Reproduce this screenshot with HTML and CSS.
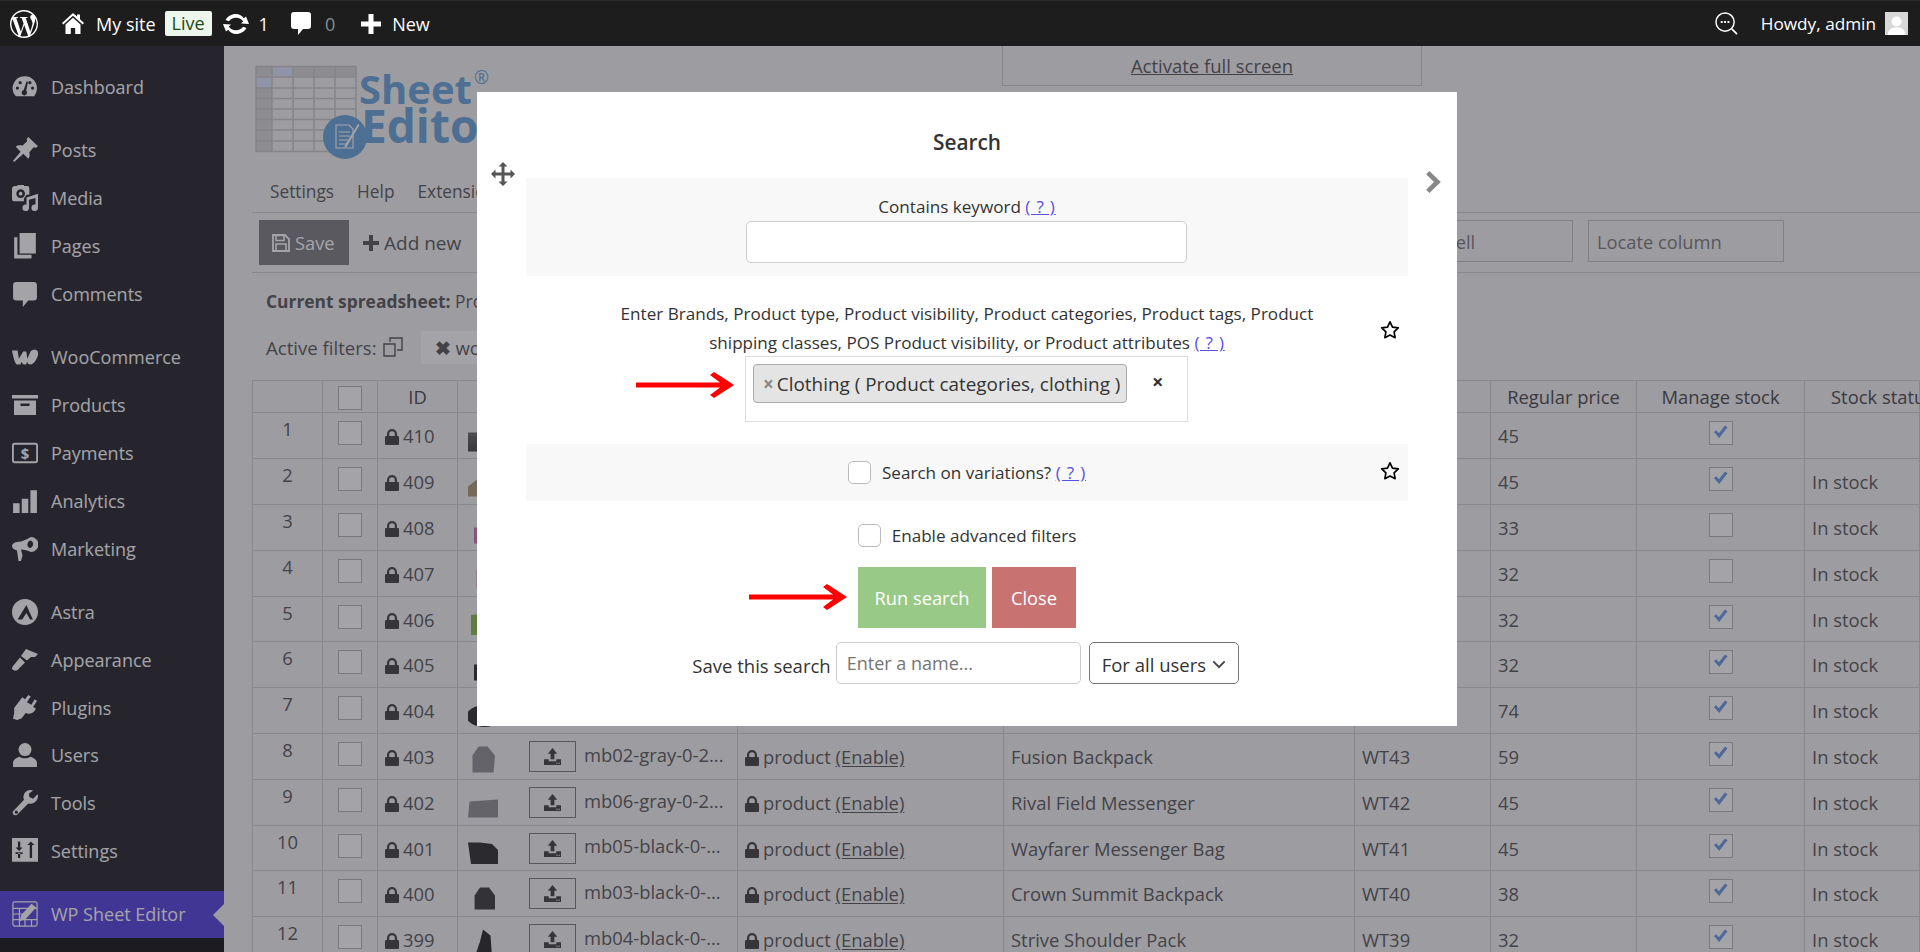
FILE: index.html
```html
<!DOCTYPE html>
<html lang="en">
<head>
  <meta charset="UTF-8" />
  <title>WP Sheet Editor</title>
  <link rel="stylesheet" href="styles.css" />
</head>
<body>
  <!-- shared icons -->
  <svg class="defs" aria-hidden="true">
    <symbol id="i-lock" viewBox="0 0 14 16"><path d="M2 7V5a5 5 0 0 1 10 0v2h1a1 1 0 0 1 1 1v7a1 1 0 0 1-1 1H1a1 1 0 0 1-1-1V8a1 1 0 0 1 1-1zm2.200 0h5.600V5a2.800 2.800 0 0 0-5.600 0z"/></symbol>
    <symbol id="i-upload" viewBox="0 0 18 18"><path d="M9 0l5 6h-3v6H7V6H4zM0 12h5v2h8v-2h5v6H0zm13 3.600v1h1.400v-1zm2.400 0v1h1.400v-1z" fill-rule="evenodd"/></symbol>
    <symbol id="i-check" viewBox="0 0 16 14"><path d="M1 7l2.500-2 2.800 3.200L12.800 0 15.500 2 6.600 13.500z"/></symbol>
    <symbol id="i-star" viewBox="0 0 20 20"><path d="M10 1.800l2.500 5.300 5.800.8-4.200 4 1 5.800L10 15.100l-5.100 2.600 1-5.800-4.200-4 5.800-.8z" fill="none" stroke="#000" stroke-width="1.700" stroke-linejoin="round"/></symbol>
  </svg>

  <!-- Admin bar -->
  <header class="adminbar">
    <svg class="ab-wp" viewBox="0 0 24 24"><path fill="#fff" d="M21.469 6.825c.84 1.537 1.318 3.3 1.318 5.175 0 3.979-2.156 7.456-5.363 9.325l3.295-9.527c.615-1.54.82-2.771.82-3.864 0-.405-.026-.78-.07-1.11m-7.981.105c.647-.03 1.232-.105 1.232-.105.582-.075.514-.93-.067-.899 0 0-1.755.135-2.88.135-1.064 0-2.85-.15-2.85-.15-.585-.03-.661.855-.075.885 0 0 .54.061 1.125.09l1.68 4.605-2.37 7.08L5.354 6.9c.649-.03 1.234-.1 1.234-.1.585-.075.516-.93-.065-.896 0 0-1.746.138-2.874.138-.2 0-.438-.008-.69-.015C4.911 3.15 8.235 1.215 12 1.215c2.809 0 5.365 1.072 7.286 2.833-.046-.003-.091-.009-.141-.009-1.06 0-1.812.923-1.812 1.914 0 .89.513 1.643 1.06 2.531.411.72.89 1.643.89 2.977 0 .915-.354 1.994-.821 3.479l-1.075 3.585-3.9-11.61.001.014zM12 22.784c-1.059 0-2.081-.153-3.048-.437l3.237-9.406 3.315 9.087c.024.053.05.101.078.149-1.12.393-2.325.609-3.582.609M1.211 12c0-1.564.336-3.05.935-4.39L7.29 21.709C3.694 19.96 1.212 16.271 1.211 12M12 0C5.385 0 0 5.385 0 12s5.385 12 12 12 12-5.385 12-12S18.615 0 12 0"/></svg>
    <svg class="ab-home" viewBox="0 0 22 21"><path fill="#fff" d="M11 0l4 3.600V1.500h3v4.800L22 10l-1.300 1.400L11 2.800 1.300 11.400 0 10z"/><path fill="#fff" d="M3.500 11.500L11 4.800l7.500 6.700V21h-5.300v-6H8.800v6H3.500z"/></svg>
    <span class="ab-site">My site</span>
    <span class="ab-live">Live</span>
    <svg class="ab-updates" viewBox="0 0 26 20"><path fill="#fff" d="M13 0c3.300 0 6.200 1.700 7.800 4.300L23 2.500 26 10l-8-.6 2.200-1.900C19 5.300 16.200 3.700 13 3.700c-3 0-5.600 1.400-7 3.600L2.500 6C4.500 2.400 8.400 0 13 0zM0 10l8 .6-2.200 1.900c1.200 2.200 4 3.800 7.200 3.800 3 0 5.600-1.400 7-3.600l3.500 1.300C21.500 17.600 17.600 20 13 20c-3.300 0-6.200-1.700-7.800-4.300L3 17.500z"/></svg>
    <span class="ab-count">1</span>
    <svg class="ab-comment" viewBox="0 0 20 23"><path fill="#fff" d="M3 0h14a3 3 0 0 1 3 3v11a3 3 0 0 1-3 3h-5l-5 6v-6H3a3 3 0 0 1-3-3V3a3 3 0 0 1 3-3z"/></svg>
    <span class="ab-count ab-zero">0</span>
    <svg class="ab-plus" viewBox="0 0 20 20"><path fill="#fff" d="M7.500 0h5v7.500H20v5h-7.500V20h-5v-7.500H0v-5h7.500z"/></svg>
    <span class="ab-new">New</span>
    <svg class="ab-search" viewBox="0 0 24 24"><circle cx="10.500" cy="10.500" r="9.500" fill="none" stroke="#fff" stroke-width="1.500"/><path d="M17.500 17.500L23 23" stroke="#fff" stroke-width="1.800" fill="none"/><path d="M6 9.500h2v2H6zm3.500 0h2v2h-2zm3.500 0h2v2h-2z" fill="#fff"/></svg>
    <span class="ab-howdy">Howdy, admin</span>
    <svg class="ab-avatar" viewBox="0 0 24 24"><path fill="#d8d8d8" d="M0 0h24v24H0z"/><circle cx="12" cy="10" r="5.200" fill="#fff"/><path fill="#fff" d="M3 24c0-6 4-8 9-8s9 2 9 8z"/></svg>
  </header>

  <div class="layout">
    <!-- Sidebar -->
    <aside class="sidebar">
      <ul class="menu">
        <li><svg viewBox="0 0 24 24"><path d="M12 2a11 11 0 0 1 11 11c0 3-1 5.500-2.600 7.500H3.600A11 11 0 0 1 12 2zM5 11.500a1.500 1.500 0 1 0 0 3 1.500 1.500 0 0 0 0-3zm2.500-5a1.500 1.500 0 1 0 0 3 1.500 1.500 0 0 0 0-3zm9 0a1.500 1.500 0 1 0 0 3 1.500 1.500 0 0 0 0-3zm2.500 5a1.500 1.500 0 1 0 0 3 1.500 1.500 0 0 0 0-3zM13.500 6.800l-2.700 8a2.500 2.500 0 1 0 2.300.6l1.700-8.300z" fill-rule="evenodd"/></svg>Dashboard</li>
        <li class="gap"></li>
        <li><svg viewBox="0 0 24 24"><path d="M15 0l9 8.500-2 1.500-2-.5-4 4.500c.7 2.500.3 4.500-1 6l-4.500-4.500L2 23l-1-1 7-8.500L3.500 9c1.500-1.300 3.500-1.700 6-1l4.500-4-.5-2z"/></svg>Posts</li>
        <li><svg viewBox="0 0 24 24"><path d="M3 1h2V0h6v1h3a2 2 0 0 1 2 2v6h-2.500L11 12.500V15H2a2 2 0 0 1-2-2V4a3 3 0 0 1 3-3zm5 3a4 4 0 1 0 0 8 4 4 0 0 0 0-8zm0 2.300a1.700 1.700 0 1 1 0 3.400 1.700 1.700 0 0 1 0-3.400z" fill-rule="evenodd"/><path d="M24 9v13a3 3 0 1 1-2.300-2.900V13l-6 1.500V22a3 3 0 1 1-2.300-2.900V12.500z" transform="translate(0 -1)"/></svg>Media</li>
        <li><svg viewBox="0 0 24 24"><path d="M7 0h15v19H7zM2 4h3v16h13v3.500H2z"/></svg>Pages</li>
        <li><svg viewBox="0 0 24 24"><path d="M4 1h16a3 3 0 0 1 3 3v11a3 3 0 0 1-3 3h-5l-5 6v-6H4a3 3 0 0 1-3-3V4a3 3 0 0 1 3-3z"/></svg>Comments</li>
        <li class="gap"></li>
        <li><svg viewBox="0 0 28 16"><path d="M0 1h6l1.500 9L12 2h3.500l1 8L20 2c1-1.500 4-2 6-1.500 2.500 1 2.500 4 1.500 7C26 12 23 16 20 16c-2.500 0-3.500-1.500-3.500-3L15 16c-2 0-4 0-4.500-3L9 16H5.500C3.500 16 1.500 9 0 1z"/></svg>WooCommerce</li>
        <li><svg viewBox="0 0 26 20"><path d="M0 0h26v3.500H0zM2 5.500h22V20H2zm6.500 3v2.400h9V8.500z" fill-rule="evenodd"/></svg>Products</li>
        <li><svg viewBox="0 0 28 22"><path d="M3 1h22a2 2 0 0 1 2 2v16a2 2 0 0 1-2 2H3a2 2 0 0 1-2-2V3a2 2 0 0 1 2-2z" fill="none" stroke="currentColor" stroke-width="2"/><text x="14" y="17" class="dollar">$</text></svg>Payments</li>
        <li><svg viewBox="0 0 24 24"><path d="M1 14h6v9H1zm8-4h6v13H9zm8-8h6v21h-6z"/></svg>Analytics</li>
        <li><svg viewBox="0 0 26 26"><path d="M19 1a6.500 6.500 0 0 1 0 15c-3-1.500-7-2.500-10-2.500l1.500 6L9 25H6.500L5 14.500C2 14 0 12 0 10c0-2 2-3.500 5-4 5 0 10-3 14-5zm0 3.500a4 4 0 0 0-1.500 7.500 4 4 0 0 0 1.500-7.500z" fill-rule="evenodd"/></svg>Marketing</li>
        <li class="gap"></li>
        <li><svg viewBox="0 0 28 28"><path d="M14 0a14 14 0 1 1 0 28 14 14 0 0 1 0-28zm1.500 6.500L6 22h5l4.500-7 4 7h3z" fill-rule="evenodd"/></svg>Astra</li>
        <li><svg viewBox="0 0 26 22"><path d="M14 0l12 5-3 3h-4l-3 2.500-1 1L9 7zM8 8.500l5 5L5.500 21c-1.500 1-4 1-5-.5-1-1.500 0-3 1-4z"/></svg>Appearance</li>
        <li><svg viewBox="0 0 24 24"><path d="M15 0l2.300 1.300-3.500 5.300 4 2.500L21 4l2 1.500-3.500 5.500 2.500 1.500-1 2c-2 2.500-5.500 3.500-8.500 2L9 21.500 5 23l-4-1 1-5.500-0-4.500L9.500 2l2.500 2z"/></svg>Plugins</li>
        <li><svg viewBox="0 0 24 24"><circle cx="12" cy="7" r="6"/><path d="M1 23v-4c0-3 4-5 6-5.500 3 2 7 2 10 0 2 .5 6 2.500 6 5.500v4z"/></svg>Users</li>
        <li><svg viewBox="0 0 24 24"><path d="M17 0a6.500 6.500 0 0 0-6.500 6.500c0 1 .2 1.800.6 2.500L1 19.500c-1.500 2 1 5 3.500 3.500L15 12.500c3.500 1 9-1.500 9-7l-.5-1.500L19.500 8 16 6.500l-.5-3L19.500 0.500zM4 19a1.500 1.500 0 1 1 0 3 1.500 1.500 0 0 1 0-3z" fill-rule="evenodd"/></svg>Tools</li>
        <li><svg viewBox="0 0 22 22"><path d="M0 0h22v20H0zM5 3v5H3l3 3 3-3H7V3zM5 13v4h2v-4zM15 6v11h2V6zM13 6h6l-3-3z M3 12h6v1.500H3z" fill-rule="evenodd"/></svg>Settings</li>
        <li class="gap"></li>
        <li class="active"><svg viewBox="0 0 28 28"><path d="M3 1h22a2 2 0 0 1 2 2v22a2 2 0 0 1-2 2H3a2 2 0 0 1-2-2V3a2 2 0 0 1 2-2zM1 8h26M1 14h14M1 20h26M8 8v19M14 20v7M21 20v7" fill="none" stroke="currentColor" stroke-width="1.300"/><path d="M21 3l5 4-11 12-7 3 2-7z"/></svg>WP Sheet Editor</li>
      </ul>
      <div class="sidebar-rest"></div>
    </aside>

    <!-- Spreadsheet page -->
    <main class="page">
      <div class="brand-row">
        <svg class="logo" viewBox="0 0 230 104">
          <g class="logo-head"><path d="M1 0h100v10H1z"/><path d="M1 10h16v76H1z"/></g>
          <path class="logo-sel" d="M17 0h22v11H17zM1 11h16v11H1z"/>
          <path class="logo-grid" d="M1 .5h100v85H1zM1 11h100M1 22h100M1 32.500h100M1 43h100M1 53.500h100M1 64h100M1 75h100M17 0v86M38 0v86M59 0v86M80 0v86"/>
          <circle class="logo-blue" cx="90" cy="71" r="22"/>
          <path d="M81 59h13l4 4v19H81zM84 66h11M84 70h11M84 74h11M84 78h8" fill="none" stroke="#fff" stroke-width="1.100"/>
          <path d="M103 58l1.500 1-13 22-2 1 .3-2.500z" fill="#fff"/>
          <text class="logo-sheet" x="104" y="38">Sheet</text>
          <text class="logo-edit" x="106" y="77">Editor</text>
          <text class="logo-reg" x="219" y="18">®</text>
        </svg>
        <a class="fullscreen" href="#">Activate full screen</a>
      </div>

      <nav class="tabs">
        <a href="#">Settings</a>
        <a href="#">Help</a>
        <a href="#">Extensions</a>
      </nav>

      <div class="toolbar">
        <button class="btn-save"><svg viewBox="0 0 18 18"><path d="M1 1h12l4 4v12H1z" fill="none" stroke="currentColor" stroke-width="1.800"/><path d="M4 1.500h8v5H4zM4 10h10v7H4z" fill="none" stroke="currentColor" stroke-width="1.600"/></svg>Save</button>
        <a class="btn-add" href="#"><svg viewBox="0 0 16 16"><path d="M6 0h4v6h6v4h-6v6H6v-6H0V6h6z"/></svg>Add new</a>
        <span class="toolbar-end">
          <input type="text" class="locate" placeholder="Locate cell" />
          <input type="text" class="locate" placeholder="Locate column" />
        </span>
      </div>

      <p class="current"><strong>Current spreadsheet:</strong> Products</p>
      <div class="filters">
        <span>Active filters:</span>
        <svg viewBox="0 0 20 20"><path d="M7 5V1h12v12h-5M1 7h11v12H1z" fill="none" stroke="currentColor" stroke-width="1.400"/></svg>
        <span class="filter-chip"><b>✖</b> woo</span>
      </div>

      <table class="sheet">
        <colgroup>
          <col class="c-n" /><col class="c-cb" /><col class="c-id" /><col class="c-file" /><col class="c-type" /><col class="c-title" /><col class="c-sku" /><col class="c-price" /><col class="c-manage" /><col class="c-stock" />
        </colgroup>
        <thead>
          <tr><th></th><th><i class="cb"></i></th><th>ID</th><th></th><th></th><th></th><th></th><th>Regular price</th><th>Manage stock</th><th class="th-stock">Stock status</th></tr>
        </thead>
        <tbody>
          <tr><td class="n">1</td><td class="m"><i class="cb"></i></td><td><svg class="lock"><use href="#i-lock"/></svg>410</td><td class="file"><span class="thumb t1"></span><span class="up"></span></td><td></td><td></td><td></td><td>45</td><td class="m"><i class="cb on"><svg><use href="#i-check"/></svg></i></td><td></td></tr>
          <tr><td class="n">2</td><td class="m"><i class="cb"></i></td><td><svg class="lock"><use href="#i-lock"/></svg>409</td><td class="file"><span class="thumb t2"></span><span class="up"></span></td><td></td><td></td><td></td><td>45</td><td class="m"><i class="cb on"><svg><use href="#i-check"/></svg></i></td><td>In stock</td></tr>
          <tr><td class="n">3</td><td class="m"><i class="cb"></i></td><td><svg class="lock"><use href="#i-lock"/></svg>408</td><td class="file"><span class="thumb t3"></span><span class="up"></span></td><td></td><td></td><td></td><td>33</td><td class="m"><i class="cb"></i></td><td>In stock</td></tr>
          <tr><td class="n">4</td><td class="m"><i class="cb"></i></td><td><svg class="lock"><use href="#i-lock"/></svg>407</td><td class="file"><span class="thumb t4"></span><span class="up"></span></td><td></td><td></td><td></td><td>32</td><td class="m"><i class="cb"></i></td><td>In stock</td></tr>
          <tr class="short"><td class="n">5</td><td class="m"><i class="cb"></i></td><td><svg class="lock"><use href="#i-lock"/></svg>406</td><td class="file"><span class="thumb t5"></span><span class="up"></span></td><td></td><td></td><td></td><td>32</td><td class="m"><i class="cb on"><svg><use href="#i-check"/></svg></i></td><td>In stock</td></tr>
          <tr><td class="n">6</td><td class="m"><i class="cb"></i></td><td><svg class="lock"><use href="#i-lock"/></svg>405</td><td class="file"><span class="thumb t6"></span><span class="up"></span></td><td></td><td></td><td></td><td>32</td><td class="m"><i class="cb on"><svg><use href="#i-check"/></svg></i></td><td>In stock</td></tr>
          <tr><td class="n">7</td><td class="m"><i class="cb"></i></td><td><svg class="lock"><use href="#i-lock"/></svg>404</td><td class="file"><span class="thumb t7"></span><span class="up"></span></td><td></td><td></td><td></td><td>74</td><td class="m"><i class="cb on"><svg><use href="#i-check"/></svg></i></td><td>In stock</td></tr>
          <tr><td class="n">8</td><td class="m"><i class="cb"></i></td><td><svg class="lock"><use href="#i-lock"/></svg>403</td><td class="file"><span class="thumb t8"></span><span class="up"><svg><use href="#i-upload"/></svg></span>mb02-gray-0-2...</td><td><svg class="lock"><use href="#i-lock"/></svg>product <u>(Enable)</u></td><td>Fusion Backpack</td><td>WT43</td><td>59</td><td class="m"><i class="cb on"><svg><use href="#i-check"/></svg></i></td><td>In stock</td></tr>
          <tr><td class="n">9</td><td class="m"><i class="cb"></i></td><td><svg class="lock"><use href="#i-lock"/></svg>402</td><td class="file"><span class="thumb t9"></span><span class="up"><svg><use href="#i-upload"/></svg></span>mb06-gray-0-2...</td><td><svg class="lock"><use href="#i-lock"/></svg>product <u>(Enable)</u></td><td>Rival Field Messenger</td><td>WT42</td><td>45</td><td class="m"><i class="cb on"><svg><use href="#i-check"/></svg></i></td><td>In stock</td></tr>
          <tr class="short"><td class="n">10</td><td class="m"><i class="cb"></i></td><td><svg class="lock"><use href="#i-lock"/></svg>401</td><td class="file"><span class="thumb t10"></span><span class="up"><svg><use href="#i-upload"/></svg></span>mb05-black-0-...</td><td><svg class="lock"><use href="#i-lock"/></svg>product <u>(Enable)</u></td><td>Wayfarer Messenger Bag</td><td>WT41</td><td>45</td><td class="m"><i class="cb on"><svg><use href="#i-check"/></svg></i></td><td>In stock</td></tr>
          <tr><td class="n">11</td><td class="m"><i class="cb"></i></td><td><svg class="lock"><use href="#i-lock"/></svg>400</td><td class="file"><span class="thumb t11"></span><span class="up"><svg><use href="#i-upload"/></svg></span>mb03-black-0-...</td><td><svg class="lock"><use href="#i-lock"/></svg>product <u>(Enable)</u></td><td>Crown Summit Backpack</td><td>WT40</td><td>38</td><td class="m"><i class="cb on"><svg><use href="#i-check"/></svg></i></td><td>In stock</td></tr>
          <tr><td class="n">12</td><td class="m"><i class="cb"></i></td><td><svg class="lock"><use href="#i-lock"/></svg>399</td><td class="file"><span class="thumb t12"></span><span class="up"><svg><use href="#i-upload"/></svg></span>mb04-black-0-...</td><td><svg class="lock"><use href="#i-lock"/></svg>product <u>(Enable)</u></td><td>Strive Shoulder Pack</td><td>WT39</td><td>32</td><td class="m"><i class="cb on"><svg><use href="#i-check"/></svg></i></td><td>In stock</td></tr>
        </tbody>
      </table>
    </main>
  </div>

  <!-- Dim layer under the popup -->
  <div class="backdrop"></div>

  <!-- Search popup -->
  <section class="modal">
    <svg class="modal-move" viewBox="0 0 24 24"><path d="M12 0l4.500 4.500h-3v6h6v-3L24 12l-4.500 4.500v-3h-6v6h3L12 24l-4.500-4.500h3v-6h-6v3L0 12l4.500-4.500v3h6v-6h-3z"/></svg>
    <svg class="modal-next" viewBox="0 0 16 24"><path d="M3.500 0L16 12 3.500 24 0 20.500 8.500 12 0 3.500z"/></svg>

    <h2 class="modal-title">Search</h2>

    <div class="band band-keyword">
      <label>Contains keyword <a href="#">( ? )</a></label>
      <input type="text" class="field" />
    </div>

    <div class="row-taxonomy">
      <span></span>
      <div class="taxonomy">
        <p>Enter Brands, Product type, Product visibility, Product categories, Product tags, Product<br />shipping classes, POS Product visibility, or Product attributes <a href="#">( ? )</a></p>
        <div class="select-box">
          <svg class="arrow arrow-a" viewBox="0 0 98 26"><path d="M0 10.500h84L74 3l4-3 20 13-20 13-4-3 10-7.500H0z"/></svg>
          <span class="select-chip"><b>×</b>Clothing ( Product categories, clothing )</span>
          <span class="select-clear">×</span>
        </div>
      </div>
      <svg class="star star-top"><use href="#i-star"/></svg>
    </div>

    <div class="band band-variations">
      <span></span>
      <label><i class="check"></i>Search on variations? <a href="#">( ? )</a></label>
      <svg class="star star-mid"><use href="#i-star"/></svg>
    </div>

    <label class="advanced"><i class="check"></i>Enable advanced filters</label>

    <div class="actions">
      <svg class="arrow arrow-b" viewBox="0 0 98 26"><path d="M0 10.500h84L74 3l4-3 20 13-20 13-4-3 10-7.500H0z"/></svg>
      <button class="btn-run">Run search</button>
      <button class="btn-close">Close</button>
    </div>

    <div class="save-row">
      <span class="save-label">Save this search</span>
      <input type="text" class="field name" placeholder="Enter a name..." />
      <span class="users">For all users<svg viewBox="0 0 16 10"><path d="M1.500 1.500L8 8l6.500-6.500" fill="none" stroke="#444" stroke-width="2.200"/></svg></span>
    </div>
  </section>
</body>
</html>
```

FILE: styles.css
```css
/* Global */
* {
  box-sizing: border-box;
}
html,
body {
  margin: 0;
  height: 100%;
  overflow: hidden;
}
body {
  font-family: 'Open Sans', 'Noto Sans', sans-serif;
  font-size: 17px;
  color: #3c3c3c;
  background: #f0f0f1;
}
a {
  color: inherit;
}
.defs {
  display: none;
}

/* Admin bar */
.adminbar {
  position: relative;
  z-index: 20;
  display: flex;
  align-items: center;
  height: 46px;
  background: #1d1d1d;
  border-top: 1px solid #2b2b2f;
  color: #fff;
  font-size: 18px;
}
.ab-wp { width: 28px; height: 28px; margin-left: 10px; }
.ab-home { width: 22px; height: 21px; margin-left: 24px; }
.ab-site { margin-left: 12px; }
.ab-live {
  margin-left: 9px;
  padding: 0 7px;
  height: 25px;
  line-height: 25px;
  border-radius: 2px;
  background: #edf7ed;
  color: #1c4a16;
}
.ab-updates { width: 26px; height: 20px; margin-left: 11px; }
.ab-count { margin-left: 10px; }
.ab-comment { width: 20px; height: 23px; margin-left: 22px; }
.ab-zero { margin-left: 14px; color: #8a8a8a; }
.ab-plus { width: 20px; height: 20px; margin-left: 26px; }
.ab-new { margin-left: 11px; }
.ab-search { width: 23px; height: 23px; margin-left: auto; }
.ab-howdy { margin-left: 23px; font-size: 17.2px; }
.ab-avatar { width: 23px; height: 23px; margin: 0 12px 0 9px; }

/* Layout */
.layout {
  display: flex;
  height: 906px;
}

/* Sidebar */
.sidebar {
  display: flex;
  flex-direction: column;
  flex: 0 0 224px;
  background: #020308;
  padding-top: 17px;
}
.menu {
  list-style: none;
  margin: 0;
  padding: 0;
  color: #fff;
  font-size: 18px;
}
.menu li {
  display: flex;
  align-items: center;
  height: 47.85px;
  fill: currentColor;
}
.menu li.gap {
  height: 15.5px;
}
.menu svg {
  width: 26px;
  height: 26px;
  margin: 0 13px 0 12px;
  flex: none;
}
.menu .active {
  position: relative;
  background: #3824d6;
}
.menu .active::after {
  content: "";
  position: absolute;
  right: 0;
  top: 13px;
  border: 11px solid transparent;
  border-left: 0;
  border-right-color: #f0f0f1;
}
.sidebar-rest {
  flex: 1;
  position: relative;
  z-index: 15;
  background: #1b1b21;
}
.dollar {
  font: 700 16px 'Open Sans', sans-serif;
  text-anchor: middle;
  fill: currentColor;
}

/* Spreadsheet page */
.page {
  flex: 1;
  min-width: 0;
  padding-left: 28px;
  overflow: hidden;
}
.brand-row {
  display: flex;
  height: 120px;
}
.logo {
  width: 230px;
  height: 104px;
  margin: 20px 0 0 3px;
  overflow: visible;
}
.logo-head { fill: #d0d0d0; }
.logo-sel { fill: #d4e0ff; }
.logo-grid { fill: none; stroke: #c0c0c0; stroke-width: 1.500; }
.logo-blue { fill: #5096d6; }
.logo-sheet,
.logo-edit {
  font-family: 'Open Sans', sans-serif;
  font-weight: 700;
  fill: #5096d6;
}
.logo-sheet { font-size: 40px; }
.logo-edit { font-size: 46px; }
.logo-reg { font-size: 18px; fill: #5096d6; }
.fullscreen {
  width: 420px;
  height: 40px;
  margin-left: 517px;
  border: 1px solid #c8c8c8;
  border-top: 0;
  text-align: center;
  line-height: 40px;
  font-size: 18.5px;
}
.tabs {
  display: flex;
  gap: 23px;
  height: 47px;
  padding: 14px 0 0 18px;
  border-bottom: 1px solid #c8c8c8;
  font-size: 17.3px;
}
.tabs a {
  text-decoration: none;
}
.toolbar {
  display: flex;
  align-items: flex-start;
  height: 60px;
  padding: 7px 0 0 7px;
  border-bottom: 1px solid #c8c8c8;
}
.btn-save {
  display: flex;
  align-items: center;
  gap: 5px;
  width: 90px;
  height: 45px;
  padding: 0 0 0 13px;
  border: 0;
  background: #6a6a6c;
  color: #fff;
  font: 18.3px 'Open Sans', sans-serif;
}
.btn-save svg {
  width: 18px;
  height: 18px;
}
.btn-add {
  display: flex;
  align-items: center;
  gap: 5px;
  height: 45px;
  margin-left: 14px;
  text-decoration: none;
  font-size: 19px;
}
.btn-add svg {
  width: 16px;
  height: 16px;
  fill: currentColor;
}
.toolbar-end {
  display: flex;
  gap: 15px;
  margin-left: auto;
  margin-right: 136px;
}
.locate {
  width: 196px;
  height: 42px;
  padding: 0 8px;
  border: 1px solid #b8b8b8;
  background: transparent;
  font: 18.3px 'Open Sans', sans-serif;
}
.locate::placeholder {
  color: #666;
}
.current {
  margin: 0;
  padding: 16px 0 0 14px;
  height: 46px;
  line-height: 25px;
  font-size: 17.4px;
}
.filters {
  display: flex;
  align-items: center;
  gap: 6px;
  height: 56px;
  padding: 0 0 0 14px;
  margin-bottom: 5px;
  font-size: 18.6px;
}
.filters svg {
  width: 20px;
  height: 20px;
}
.filter-chip {
  margin-left: 12px;
  height: 33px;
  line-height: 33px;
  padding: 0 12px 0 14px;
  background: #fff;
}

/* Table */
.sheet {
  border-collapse: collapse;
  table-layout: fixed;
  width: 1668px;
  font-size: 18.4px;
}
.c-n { width: 70px; }
.c-cb { width: 55px; }
.c-id { width: 80px; }
.c-file { width: 280px; }
.c-type { width: 266px; }
.c-title { width: 351px; }
.c-sku { width: 136px; }
.c-price { width: 146px; }
.c-manage { width: 168px; }
.sheet th,
.sheet td {
  border: 1px solid #c8c8c8;
  padding: 0 7px;
  white-space: nowrap;
}
.sheet th {
  height: 32px;
  font-weight: 400;
  color: #2a2a2a;
}
.sheet td {
  height: 46px;
}
.sheet .short td {
  height: 45px;
}
.sheet .th-stock {
  text-align: left;
  padding-left: 26px;
}
.sheet td.n {
  text-align: center;
  vertical-align: top;
  padding-top: 4px;
  line-height: 24px;
}
.sheet td.m {
  text-align: center;
  vertical-align: top;
  padding-top: 8px;
}
.sheet th .cb {
  vertical-align: middle;
}
.cb {
  display: inline-block;
  width: 24px;
  height: 24px;
  border: 1px solid #aaa;
  background: #fff;
  vertical-align: top;
}
.cb svg {
  display: block;
  width: 15px;
  height: 14px;
  margin: 3px 0 0 3px;
  fill: #4e8ae0;
}
.lock {
  width: 14px;
  height: 16px;
  margin-right: 4px;
  fill: #222;
  vertical-align: -2px;
}
.thumb {
  display: inline-block;
  width: 30px;
  height: 30px;
  margin: 4px 31px 0 3px;
  vertical-align: middle;
}
.up {
  display: inline-flex;
  align-items: center;
  justify-content: center;
  width: 47px;
  height: 31px;
  margin-right: 8px;
  border: 1px solid #666;
  vertical-align: middle;
}
.up svg {
  width: 17px;
  height: 17px;
  fill: #222;
}
.sheet u {
  text-underline-offset: 2px;
}

/* product pictures */
.t1 { background: linear-gradient(#666, #222); clip-path: polygon(0 33%, 100% 33%, 100% 97%, 0 97%); }
.t2 { background: #a08a60; clip-path: polygon(0 60%, 30% 37%, 100% 37%, 100% 93%, 0 93%); }
.t3 { background: #c060a0; clip-path: polygon(20% 43%, 100% 43%, 100% 97%, 20% 97%); }
.t4 { background: #e0b0c8; clip-path: polygon(27% 30%, 100% 30%, 100% 93%, 27% 93%); }
.t5 { background: #70b52c; clip-path: polygon(10% 30%, 100% 20%, 100% 97%, 10% 97%); }
.t6 { background: #0a0a0a; clip-path: polygon(20% 43%, 100% 43%, 100% 97%, 20% 97%); }
.t7 { background: #0a0a0a; clip-path: ellipse(60% 36% at 55% 62%); }
.t8 { background: #7e7e80; clip-path: polygon(35% 10%, 65% 10%, 90% 40%, 85% 97%, 15% 97%, 15% 40%); }
.t9 { background: #7e7e80; clip-path: polygon(5% 40%, 100% 33%, 100% 93%, 0 93%); }
.t10 { background: #0c0c0c; clip-path: polygon(0 25%, 40% 25%, 80% 30%, 100% 50%, 100% 97%, 10% 97%); }
.t11 { background: #1c1c1c; clip-path: polygon(40% 23%, 70% 23%, 90% 50%, 90% 97%, 22% 97%, 22% 50%); }
.t12 { background: #050505; clip-path: polygon(50% 10%, 75% 30%, 80% 100%, 23% 100%, 40% 50%); }

/* Dim layer */
.backdrop {
  position: fixed;
  inset: 46px 0 0 0;
  z-index: 10;
  background: rgba(74, 72, 82, 0.5);
}

/* Search popup */
.modal {
  position: absolute;
  z-index: 30;
  left: 477px;
  top: 92px;
  width: 980px;
  height: 634px;
  padding: 37px 49px 0;
  background: #fff;
  color: #333;
  text-align: center;
  font-size: 17.1px;
}
.modal a {
  color: #5a4fe0;
  letter-spacing: 0.8px;
}
.modal-move {
  position: absolute;
  left: 14px;
  top: 70px;
  width: 24px;
  height: 24px;
  fill: #555;
}
.modal-next {
  position: absolute;
  right: 16px;
  top: 79px;
  width: 15px;
  height: 22px;
  fill: #888;
}
.modal-title {
  margin: 0 0 22px;
  font-size: 20.8px;
  line-height: 27px;
  font-weight: 600;
}
.band {
  background: #f8f8f8;
}
.band-keyword {
  height: 98px;
  padding-top: 17px;
}
.band-keyword label {
  display: block;
  line-height: 24px;
  margin-bottom: 2px;
}
.field {
  height: 42px;
  border: 1px solid #ccc;
  border-radius: 5px;
  background: #fff;
  font: 18px 'Open Sans', sans-serif;
}
.band-keyword .field {
  width: 441px;
  margin-right: 2px;
}
.row-taxonomy {
  display: grid;
  grid-template-columns: 36px 1fr 36px;
  height: 168px;
  padding-top: 23px;
}
.taxonomy p {
  margin: 0;
  line-height: 29px;
  white-space: nowrap;
}
.star {
  display: block;
  width: 20px;
  height: 20px;
  justify-self: center;
  align-self: center;
}
.star-top {
  align-self: start;
  margin-top: 21px;
}
.star-mid {
  margin-bottom: 4px;
}
.select-box {
  position: relative;
  display: flex;
  align-items: flex-start;
  width: 443px;
  height: 66px;
  margin: -1px 0 0 183px;
  padding: 7px;
  border: 1px solid #ddd;
  font-size: 18.9px;
}
.select-chip {
  display: flex;
  align-items: center;
  gap: 3px;
  width: 374px;
  height: 39px;
  padding-left: 9px;
  border: 1px solid #aaa;
  border-radius: 4px;
  background: #e4e4e4;
  white-space: nowrap;
}
.select-chip b {
  color: #888;
  font-weight: 700;
}
.select-clear {
  margin: 8px 0 0 25px;
  font-size: 20px;
  font-weight: 700;
  line-height: 20px;
}
.arrow {
  position: absolute;
  width: 98px;
  height: 26px;
  fill: #f00;
}
.arrow-a {
  left: -110px;
  top: 15px;
}
.band-variations {
  display: grid;
  grid-template-columns: 36px 1fr 36px;
  align-items: center;
  height: 57px;
}
.check {
  display: inline-block;
  width: 23px;
  height: 23px;
  margin-right: 11px;
  border: 1px solid #bbb;
  border-radius: 5px;
  background: #fff;
  vertical-align: -5px;
}
.advanced {
  display: block;
  height: 66px;
  padding-top: 22px;
  line-height: 26px;
}
.actions {
  position: relative;
  display: flex;
  justify-content: center;
  gap: 6px;
}
.arrow-b {
  left: 223px;
  top: 17px;
}
.actions button {
  height: 61px;
  border: 0;
  color: #fff;
  font: 18.3px 'Open Sans', sans-serif;
}
.btn-run {
  width: 128px;
  background: #99c987;
}
.btn-close {
  width: 84px;
  background: #c97272;
}
.save-row {
  display: flex;
  justify-content: center;
  align-items: center;
  height: 42px;
  margin-top: 14px;
  padding-right: 3px;
  font-size: 18.5px;
}
.save-label {
  padding-top: 4px;
}
.field.name {
  width: 245px;
  margin: 0 8px 0 5px;
  padding: 0 10px;
}
.field.name::placeholder {
  color: #757575;
}
.users {
  display: flex;
  align-items: center;
  justify-content: space-between;
  width: 150px;
  height: 42px;
  padding: 2px 12px 0;
  border: 1px solid #767676;
  border-radius: 5px;
}
.users svg {
  width: 14px;
  height: 9px;
}
```
